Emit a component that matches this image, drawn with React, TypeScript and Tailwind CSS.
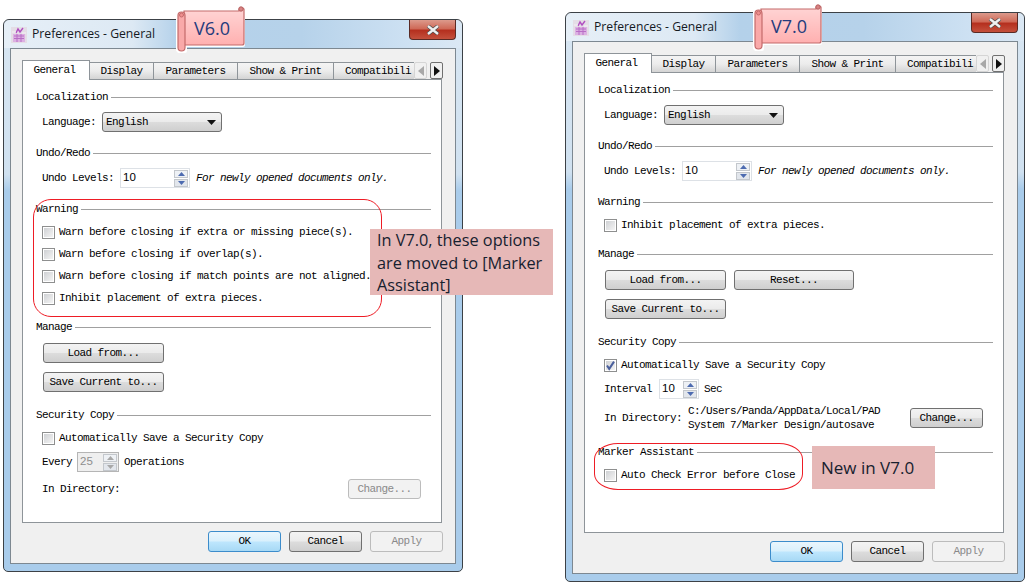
import { ReactNode } from "react";

const btnBg =
  "bg-[linear-gradient(#f3f3f3_0%,#ebebeb_48%,#dcdcdc_52%,#cfcfcf_100%)]";

const Heading = ({ label, className = "" }: { label: string; className?: string }) => (
  <div className={`flex items-center h-4 gap-[3px] ${className}`}>
    <span className="whitespace-nowrap">{label}</span>
    <div className="flex-1 h-px bg-[#a0a0a0]" />
  </div>
);

const Button = ({
  label,
  disabled,
  className = "",
}: {
  label: string;
  disabled?: boolean;
  className?: string;
}) => (
  <div
    className={`flex items-center justify-center h-5 rounded-[3px] border whitespace-nowrap ${
      disabled
        ? "border-[#bcbcbc] bg-[#f2f2f2] text-[#8a8a8a]"
        : `border-[#707070] ${btnBg}`
    } ${className}`}
  >
    {label}
  </div>
);

const CheckBox = ({
  label,
  checked,
  className = "",
}: {
  label: string;
  checked?: boolean;
  className?: string;
}) => (
  <div className={`flex items-center h-[22px] pl-[6px] gap-[4px] ${className}`}>
    <div className="relative w-[13px] h-[13px] border border-[#8e8f8f] bg-white p-px shrink-0">
      <div className="w-full h-full bg-[linear-gradient(135deg,#cfd1d4,#f4f4f4)]" />
      {checked && (
        <svg viewBox="0 0 13 13" className="absolute -inset-px w-[13px] h-[13px]">
          <path d="M3 6.5l2.2 3.4L10 2.6" fill="none" stroke="#4a5f9c" strokeWidth="2" />
        </svg>
      )}
    </div>
    <span className="whitespace-nowrap">{label}</span>
  </div>
);

const Arrow = ({ up, color }: { up?: boolean; color: string }) => (
  <svg viewBox="0 0 7 4" className="w-[7px] h-1">
    <path d={up ? "M3.5 0L7 4H0z" : "M0 0h7L3.5 4z"} fill={color} />
  </svg>
);

const Spinner = ({
  value,
  disabled,
  className = "",
}: {
  value: string;
  disabled?: boolean;
  className?: string;
}) => {
  const arrow = disabled ? "#a8a8a8" : "#4d6bb0";
  return (
    <div
      className={`flex items-center justify-between h-5 pl-[2px] pr-px border font-['Liberation_Sans',sans-serif] tracking-normal text-[11.5px] ${
        disabled
          ? "border-[#b5b5b5] bg-[#efefef] text-[#8e8e8e]"
          : "border-[#dde1e6] bg-white"
      } ${className}`}
    >
      <span>{value}</span>
      <div className="flex flex-col gap-px w-[14px]">
        <div className="flex items-center justify-center h-2 border border-[#c3c7cc] bg-[#eef1f5]">
          <Arrow up color={arrow} />
        </div>
        <div className="flex items-center justify-center h-2 border border-[#c3c7cc] bg-[#e2e6ec]">
          <Arrow color={arrow} />
        </div>
      </div>
    </div>
  );
};

const Combo = () => (
  <div
    className={`flex items-center justify-between w-[120px] h-5 ml-1 pl-[3px] pr-[5px] border border-[#707070] rounded-[3px] ${btnBg}`}
  >
    <span>English</span>
    <svg viewBox="0 0 9 5" className="w-[9px] h-[5px]">
      <path d="M0 0h9L4.5 5z" fill="#111" />
    </svg>
  </div>
);

const AppIcon = () => (
  <svg viewBox="0 0 16 16" className="w-4 h-4 shrink-0">
    <rect x="0" y="0" width="16" height="16" fill="#e4dde6" />
    <rect x="2" y="7" width="12" height="8" fill="#dcb0e2" />
    <path d="M3 9h10M3 11.5h10M6 7v8M10 7v8" stroke="#b86ec6" strokeWidth="1" />
    <path d="M5 6l2-4 2 3 3-4" fill="none" stroke="#b14fc0" strokeWidth="1.4" />
    <path d="M1 5h4M11 6h4" stroke="#f4f0f5" strokeWidth="1" />
  </svg>
);

const CloseButton = () => (
  <div className="flex items-center justify-center w-[47px] h-5 border border-t-0 border-[#5a2a24] rounded-b-[4px] bg-[linear-gradient(#dc9a8c_0%,#cf6a58_45%,#b5301f_55%,#c4503c_100%)]">
    <svg viewBox="0 0 14 10" className="w-[14px] h-[10px]">
      <path d="M2 1l10 8M12 1L2 9" stroke="#4a4a4a" strokeWidth="3.8" />
      <path d="M2 1l10 8M12 1L2 9" stroke="#f0f0f0" strokeWidth="2.4" />
    </svg>
  </div>
);

const Tab = ({ label, active, className = "" }: { label: string; active?: boolean; className?: string }) => (
  <div
    className={`flex items-center justify-center border border-[#8e9499] overflow-hidden whitespace-nowrap ${
      active
        ? "h-5 pr-[3px] bg-white border-b-0 relative z-10 -mb-px"
        : `h-[17px] pt-px border-b-0 border-l-0 bg-[linear-gradient(#f4f4f4_0%,#ececec_50%,#d4d4d4_100%)]`
    } ${className}`}
  >
    {label}
  </div>
);

const Tabs = () => (
  <div className="flex items-end h-[19px] relative">
    <Tab label="General" active className="w-[68px]" />
    <Tab label="Display" className="w-16" />
    <Tab label="Parameters" className="w-[84px]" />
    <Tab label="Show & Print" className="w-24" />
    <div className="flex items-center w-[80px] h-[17px] pl-[11px] pt-px border-t border-[#8e9499] overflow-hidden whitespace-nowrap bg-[linear-gradient(#f4f4f4_0%,#ececec_50%,#d4d4d4_100%)]">
      Compatibili
    </div>
    <div className="flex gap-[3px] relative z-10">
      <div className="flex items-center justify-center w-[13px] h-[17px] border border-[#d5d5d5] rounded-[2px] bg-[#f0f0f0]">
        <svg viewBox="0 0 6 10" className="w-[6px] h-[10px]">
          <path d="M6 0v10L0 5z" fill="#a8a8a8" />
        </svg>
      </div>
      <div className="flex items-center justify-center w-[13px] h-[17px] border border-[#707070] rounded-[2px] bg-[#f0f0f0]">
        <svg viewBox="0 0 6 10" className="w-[6px] h-[10px]">
          <path d="M0 0v10l6-5z" fill="#111" />
        </svg>
      </div>
    </div>
  </div>
);

const Window = ({
  className,
  paneHeight,
  children,
}: {
  className: string;
  paneHeight: string;
  children: ReactNode;
}) => (
  <div
    className={`absolute w-[460px] flex flex-col border border-[#3c4146] rounded-t-[6px] rounded-b-[5px] bg-[linear-gradient(180deg,#d8e6f2_0%,#d0e1f0_28%,#a9cceb_31%,#a9cceb_100%)] ${className}`}
  >
    <div className="flex items-start h-[28px] pl-[7px] pr-[6px] rounded-t-[6px] bg-[linear-gradient(90deg,#e6eff7_0%,#dde9f4_28%,#b4d1ea_38%,#b6d2ea_65%,#cfe2f3_90%,#dbe8f4_100%)]">
      <div className="flex items-center gap-[5px] h-[28px] pt-px font-['Open_Sans',sans-serif] text-[12.2px] text-[#15191f]">
        <AppIcon />
        <span>Preferences - General</span>
      </div>
      <div className="flex-1" />
      <CloseButton />
    </div>
    <div className="mx-[6px] mb-[7px] px-[11px] pt-[11px] border border-[#7d8891] bg-[#f0f0f0] font-['Liberation_Mono',monospace] text-[11px] tracking-[-0.6px] text-black">
      <Tabs />
      <div
        className={`flex flex-col pl-[13px] pr-[10px] pt-[9px] w-[420px] border border-[#8e9499] bg-white ${paneHeight}`}
      >
        {children}
      </div>
      <div className="flex justify-end gap-2 w-[421px] mt-2 h-[21px] mb-[11px]">
        <Button
          label="OK"
          className="!h-[21px] w-[73px] !border-[#3c8ccb] !bg-[linear-gradient(#eaf6fd_0%,#d9f0fc_48%,#bee6fd_52%,#a7d9f5_100%)]"
        />
        <Button label="Cancel" className="!h-[21px] w-[73px]" />
        <Button label="Apply" disabled className="!h-[21px] w-[73px]" />
      </div>
    </div>
  </div>
);

const ScrollTag = ({ label, className }: { label: string; className: string }) => (
  <div className={`absolute w-[72px] h-[50px] z-20 ${className}`}>
    <svg viewBox="0 0 72 50" className="absolute inset-0 w-full h-full">
      <defs>
        <linearGradient id="scrollFill" x1="0" y1="0" x2="0" y2="1">
          <stop offset="0" stopColor="#ffd6d6" />
          <stop offset="1" stopColor="#ffb0b0" />
        </linearGradient>
      </defs>
      <path
        d="M1 11l4-4h58V3h4v39H9v6H3l-2-2z"
        fill="#fff"
        stroke="#fff"
        strokeWidth="4"
        strokeLinejoin="round"
      />
      <path
        d="M8 8h55V6a3 3 0 0 1 5 0v34a2 2 0 0 1-2 2H8z"
        fill="url(#scrollFill)"
        stroke="#c46a6a"
        strokeWidth="1.2"
      />
      <rect x="2" y="9" width="7" height="39" rx="3.5" fill="#f9a9a9" stroke="#c46a6a" strokeWidth="1.2" />
      <circle cx="5.5" cy="12" r="2" fill="#f08f8f" stroke="#c46a6a" />
      <circle cx="65" cy="6" r="2.2" fill="#d88484" stroke="#b86060" />
    </svg>
    <span className="absolute left-[9px] right-[9px] top-[13px] text-center font-['Open_Sans',sans-serif] text-[18px] leading-6 text-[#253b7c]">
      {label}
    </span>
  </div>
);

const Callout = ({ className, children }: { className: string; children: ReactNode }) => (
  <div
    className={`absolute z-20 bg-[#e6b8b7] text-[#17212f] font-['Open_Sans',sans-serif] ${className}`}
  >
    {children}
  </div>
);

const Label = ({ children, className = "" }: { children: ReactNode; className?: string }) => (
  <span className={`whitespace-nowrap ${className}`}>{children}</span>
);

export default function App() {
  return (
    <div className="relative w-[1028px] h-[586px] overflow-hidden bg-white">
      <Window className="left-[3px] top-[19px]" paneHeight="h-[444px]">
        <Heading label="Localization" />
        <div className="flex items-center h-5 mt-[7px] ml-[6px] gap-[2px]">
          <Label>Language:</Label>
          <Combo />
        </div>
        <Heading label="Undo/Redo" className="mt-[13px]" />
        <div className="flex items-center h-5 mt-[7px] ml-[6px]">
          <Label>Undo Levels:</Label>
          <Spinner value="10" className="w-[70px] ml-[6px]" />
          <Label className="italic ml-[6px]">For newly opened documents only.</Label>
        </div>
        <Heading label="Warning" className="mt-[13px]" />
        <div className="flex flex-col mt-1">
          <CheckBox label="Warn before closing if extra or missing piece(s)." />
          <CheckBox label="Warn before closing if overlap(s)." />
          <CheckBox label="Warn before closing if match points are not aligned." />
          <CheckBox label="Inhibit placement of extra pieces." />
        </div>
        <Heading label="Manage" className="mt-[10px]" />
        <Button label="Load from..." className="w-[121px] ml-[7px] mt-2" />
        <Button label="Save Current to..." className="w-[121px] ml-[7px] mt-[9px]" />
        <Heading label="Security Copy" className="mt-[15px]" />
        <CheckBox label="Automatically Save a Security Copy" className="mt-1" />
        <div className="flex items-center h-5 mt-[3px] ml-[6px] gap-[5px]">
          <Label>Every</Label>
          <Spinner value="25" disabled className="w-[42px]" />
          <Label>Operations</Label>
        </div>
        <div className="flex items-center justify-between h-5 mt-[7px] ml-[6px] mr-[10px]">
          <Label>In Directory:</Label>
          <Button label="Change..." disabled className="w-[73px]" />
        </div>
      </Window>

      <Window className="left-[565px] top-[12px]" paneHeight="h-[461px]">
        <Heading label="Localization" />
        <div className="flex items-center h-5 mt-[7px] ml-[6px] gap-[2px]">
          <Label>Language:</Label>
          <Combo />
        </div>
        <Heading label="Undo/Redo" className="mt-[13px]" />
        <div className="flex items-center h-5 mt-[7px] ml-[6px]">
          <Label>Undo Levels:</Label>
          <Spinner value="10" className="w-[70px] ml-[6px]" />
          <Label className="italic ml-[6px]">For newly opened documents only.</Label>
        </div>
        <Heading label="Warning" className="mt-[13px]" />
        <CheckBox label="Inhibit placement of extra pieces." className="mt-1" />
        <Heading label="Manage" className="mt-[10px]" />
        <div className="flex gap-2 ml-[7px] mt-2">
          <Button label="Load from..." className="w-[121px]" />
          <Button label="Reset..." className="w-[120px]" />
        </div>
        <Button label="Save Current to..." className="w-[121px] ml-[7px] mt-[9px]" />
        <Heading label="Security Copy" className="mt-[15px]" />
        <CheckBox label="Automatically Save a Security Copy" checked className="mt-1" />
        <div className="flex items-center h-5 mt-[3px] ml-[6px] gap-[5px]">
          <Label>Interval</Label>
          <Spinner value="10" className="w-[40px] ml-[2px]" />
          <Label>Sec</Label>
        </div>
        <div className="flex items-center justify-between h-5 mt-[9px] ml-[6px] mr-[10px]">
          <div className="flex items-center gap-[6px]">
            <Label>In Directory:</Label>
            <div className="flex flex-col leading-[14px]">
              <Label>C:/Users/Panda/AppData/Local/PAD</Label>
              <Label>System 7/Marker Design/autosave</Label>
            </div>
          </div>
          <Button label="Change..." className="w-[73px]" />
        </div>
        <Heading label="Marker Assistant" className="mt-[16px]" />
        <CheckBox label="Auto Check Error before Close" className="mt-1" />
      </Window>

      <ScrollTag label="V6.0" className="left-[176px] top-[3px]" />
      <ScrollTag label="V7.0" className="left-[753px] top-px" />

      <div className="absolute left-[33px] top-[199px] w-[349px] h-[118px] border border-[#ee1c25] rounded-[18px] z-10" />
      <div className="absolute left-[594px] top-[443px] w-[209px] h-[47px] border border-[#ee1c25] rounded-[24px/16px] z-10" />

      <Callout className="left-[370px] top-[229px] w-[183px] h-[66px] pl-[7px] text-[16.3px] leading-[22.5px]">
        <p>In V7.0, these options</p>
        <p>are moved to [Marker</p>
        <p>Assistant]</p>
      </Callout>
      <Callout className="left-[812px] top-[446px] w-[123px] h-[43px] flex items-center pl-[9px] text-[17px]">
        New in V7.0
      </Callout>
    </div>
  );
}
